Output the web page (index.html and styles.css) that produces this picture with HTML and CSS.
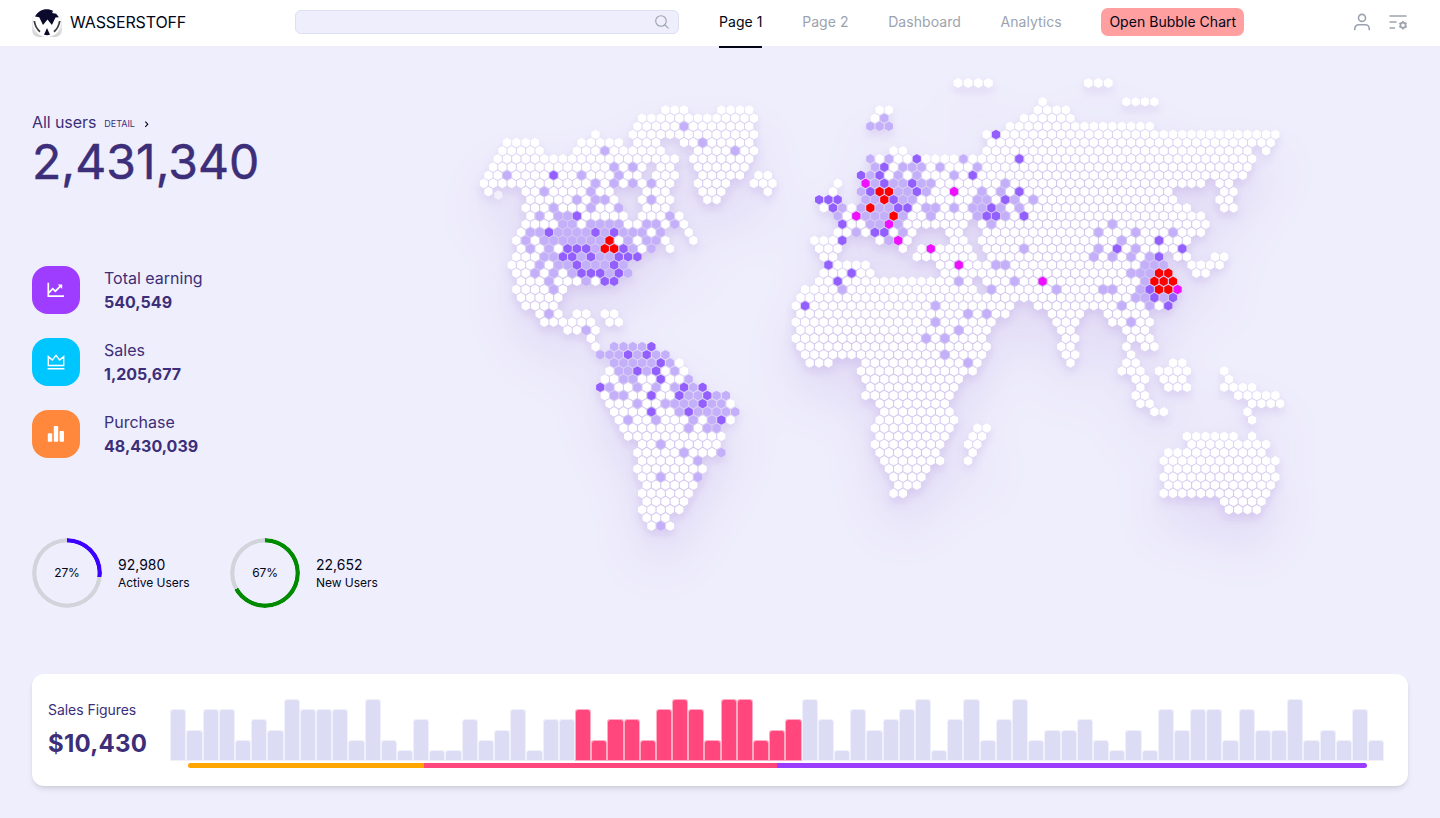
FILE: index.html
```
<!DOCTYPE html>
<html lang="en">
<head>
<meta charset="utf-8">
<title>Wasserstoff</title>
<link rel="stylesheet" href="styles.css">
</head>
<body>
<header class="topbar">
  <a class="brand">
    <svg class="brand-logo" width="30" height="30" viewBox="0 0 30 30">
      <defs><linearGradient id="rim" x1="0" y1="0" x2="0" y2="1"><stop offset="0" stop-color="#fff"/><stop offset="1" stop-color="#d2d2d4"/></linearGradient></defs>
      <rect y="4" width="30" height="25" rx="7" fill="url(#rim)"/>
      <circle cx="15" cy="15" r="14" fill="#fff"/>
      <path d="M3 8.500C6 3.500 10 1.200 14.500 1.200c2.800 0 4.800.5 6.500 1.600l-.8 2.200 4 .8 2.700 3.400-3.400.4-3.600 7.400-4.400-5.500-4.500 5.500L7.200 9.200z" fill="#0b0a2c"/>
      <path d="M2.300 13c.6 4.300 2.500 8 5.700 10.800M27.700 13c-.6 4.300-2.500 8-5.700 10.800" stroke="#3a3a40" stroke-width="1.800" fill="none"/>
      <path d="M15 20l3 6.700c-2 .6-4 .6-6 0z" fill="#0b0a2c"/>
    </svg>
    <span>WASSERSTOFF</span>
  </a>
  <div class="search">
    <svg width="16" height="16" viewBox="0 0 16 16" fill="none" stroke="#9ca3af" stroke-width="1.100" stroke-linecap="round"><circle cx="7" cy="7" r="5.300"/><path d="M11 11L14.200 14.200"/></svg>
  </div>
  <nav class="nav">
    <a class="nav-link nav-link-active">Page 1</a>
    <a class="nav-link">Page 2</a>
    <a class="nav-link">Dashboard</a>
    <a class="nav-link">Analytics</a>
    <button class="nav-button">Open Bubble Chart</button>
  </nav>
  <div class="tools">
    <svg width="20" height="20" viewBox="0 0 20 20" fill="none" stroke="#9ca3af" stroke-width="1.600" stroke-linecap="round"><circle cx="10" cy="5.900" r="3.500"/><path d="M2.800 17.600v-1a3.800 3.800 0 0 1 3.800-3.800h6.800a3.800 3.800 0 0 1 3.800 3.800v1"/></svg>
    <svg width="20" height="20" viewBox="0 0 20 20" fill="none" stroke="#9ca3af" stroke-width="1.700"><path d="M1.500 4h17M1.500 10h7M1.500 16h5.500"/><circle cx="15" cy="13.200" r="2.600"/><path d="M15 9v1.600M15 15.800v1.600M11.400 11.100l1.400.8M17.200 14.500l1.400.8M11.400 15.300l1.400-.8M17.200 11.900l1.400-.8"/></svg>
  </div>
</header>

<main class="main">
  <div class="overview">
    <section class="side">
      <div class="all-users">
        <div class="all-users-head"><span>All users</span><span class="detail">DETAIL</span>
          <svg width="10" height="10" viewBox="0 0 10 10" fill="none" stroke="#020617" stroke-width="1.100"><path d="M3.300 2.600L5.800 5.200 3.300 7.800"/></svg>
        </div>
        <div class="all-users-value">2,431,340</div>
      </div>
      <div class="stats">
        <div class="stat">
          <span class="stat-icon stat-earning"><svg width="20" height="20" viewBox="0 0 20 20" fill="none" stroke="#fff" stroke-width="1.700"><path d="M2.300 2.800v13.300H18M2.800 12.800L6.700 8.700 9.300 11.200 15 5.600"/><path d="M11.700 4.600H16.200V9.100z" fill="#fff" stroke="none"/></svg></span>
          <div><div>Total earning</div><div class="stat-value">540,549</div></div>
        </div>
        <div class="stat">
          <span class="stat-icon stat-sales"><svg width="20" height="20" viewBox="0 0 20 20" fill="none" stroke="#fff" stroke-width="1.400"><path d="M2.300 4.600v8.900h15.400V4.600l-4 3.500L10 3.300 6.300 8.100zM1.600 16.700h16.800"/></svg></span>
          <div><div>Sales</div><div class="stat-value">1,205,677</div></div>
        </div>
        <div class="stat">
          <span class="stat-icon stat-purchase"><svg width="20" height="20" viewBox="0 0 20 20" fill="#fff"><rect x="1.800" y="9.300" width="4.400" height="8.500" rx=".8"/><rect x="7.800" y="2" width="4.400" height="15.800" rx=".8"/><rect x="13.600" y="7" width="4.400" height="10.800" rx=".8"/></svg></span>
          <div><div>Purchase</div><div class="stat-value">48,430,039</div></div>
        </div>
      </div>
      <div class="rings">
        <div class="ring-item">
          <div class="ring ring-active"><span>27%</span></div>
          <div><div class="ring-value">92,980</div><div class="ring-label">Active Users</div></div>
        </div>
        <div class="ring-item">
          <div class="ring ring-new"><span>67%</span></div>
          <div><div class="ring-value">22,652</div><div class="ring-label">New Users</div></div>
        </div>
      </div>
    </section>
    <svg class="map" id="map" width="968" height="580" viewBox="440 46 968 580"></svg>
  </div>

  <section class="sales">
    <div class="sales-head"><div class="sales-title">Sales Figures</div><div class="sales-value">$10,430</div></div>
    <div class="chart">
      <div class="bars" id="bars"></div>
      <div class="range"><i class="range-a"></i><i class="range-b"></i><i class="range-c"></i></div>
    </div>
  </section>
</main>
<script src="app.js"></script>
</body>
</html>
```
FILE: styles.css
```
* { box-sizing: border-box; }
body {
  margin: 0;
  height: 818px;
  overflow: hidden;
  background: #efeefc;
  color: #020617;
  font: 16px/24px Inter, "Liberation Sans", sans-serif;
}
.topbar { display: flex; height: 46px; padding: 0 32px; background: #fff; align-items: center; }
.brand { display: flex; align-items: center; gap: 8px; width: 263px; height: 44px; letter-spacing: -.13px; }
.brand span { margin-bottom: 2px; }
.brand-logo { display: block; }
.search {
  display: flex; align-items: center; justify-content: flex-end;
  width: 384px; height: 24px; padding-right: 8px; margin: 0 40px 2px 0;
  background: #efeefc; border: 1px solid #dddff3; border-radius: 6px;
}
.nav { display: flex; align-items: flex-start; gap: 39.7px; font-size: 14px; line-height: 20px; letter-spacing: .05px; height: 46px; }
.nav-link { height: 48px; padding-top: 12px; color: #9ca3af; white-space: nowrap; }
.nav-link-active { color: #020617; border-bottom: 2px solid #020617; }
.nav-button {
  margin-top: 8px; height: 28px; padding: 0 8px; border: 0; border-radius: 7px;
  background: #ff9f9f; color: #020617; font: inherit; letter-spacing: .04px; white-space: nowrap;
}
.tools { display: flex; gap: 16px; margin: 0 0 2px auto; }
.tools svg { display: block; }

.main { padding: 0 32px; }
.overview { display: flex; height: 628px; }
.side { width: 408px; padding-top: 64px; color: #3c2e78; flex: none; }
.all-users-head { display: flex; align-items: center; height: 24px; letter-spacing: -.08px; }
.all-users-head svg { margin: 4px 0 0 7px; }
.detail { margin: 4px 0 0 8px; font-size: 9px; line-height: 12px; letter-spacing: 0; }
.all-users-value { font-size: 48px; line-height: 56px; letter-spacing: .08px; -webkit-text-stroke: .5px #3c2e78; }
.stats { display: flex; flex-direction: column; gap: 24px; margin-top: 76px; }
.stat { display: flex; gap: 24px; height: 48px; }
.stat-icon { display: grid; place-items: center; width: 48px; height: 48px; border-radius: 16px; }
.stat-earning { background: #9e3dff; }
.stat-sales { background: #00c6ff; }
.stat-purchase { background: #ff883c; }
.stat-value { font-weight: 700; }
.rings { display: flex; gap: 40px; margin-top: 80px; color: #020617; }
.ring-item { display: flex; align-items: center; gap: 16px; white-space: nowrap; width: 158px; }
.ring { position: relative; display: grid; place-items: center; flex: none; width: 70px; height: 70px; font-size: 12px; letter-spacing: -.15px; }
.ring::before {
  content: ""; position: absolute; inset: 0; border-radius: 50%;
  -webkit-mask: radial-gradient(closest-side, transparent 30.2px, #000 30.9px);
  mask: radial-gradient(closest-side, transparent 30.2px, #000 30.9px);
}
.ring-active::before { background: conic-gradient(#3b00ff 27%, #d1d5db 0); }
.ring-new::before { background: conic-gradient(#008a00 67%, #d1d5db 0); }
.ring-value { font-size: 14px; line-height: 20px; }
.ring-label { font-size: 12px; line-height: 16px; letter-spacing: -.04px; }

.map { display: block; flex: none; }
.cells { filter: drop-shadow(0 5px 5px rgba(110, 50, 190, .15)) drop-shadow(0 32px 24px rgba(110, 50, 190, .12)); }
.cell { fill: #fff; stroke: #fff; stroke-width: 1.7; stroke-linejoin: round; }
.cell-l { fill: #c4affa; stroke: #c4affa; }
.cell-d { fill: #935fff; stroke: #935fff; }
.cell-m { fill: #ee10ff; stroke: #ee10ff; }
.cell-r { fill: #f00; stroke: #f00; }
.cell-faint { opacity: .6; }

.sales {
  display: flex; height: 112px; padding: 24px 23.5px 0 16px; background: #fff; border-radius: 12px;
  box-shadow: 0 4px 6px -1px rgba(0, 0, 0, .1), 0 2px 4px -2px rgba(0, 0, 0, .1);
}
.sales-head { width: 122.3px; color: #3c2e78; }
.sales-title { font-size: 14px; line-height: 24px; letter-spacing: -.05px; }
.sales-value { font-size: 24px; line-height: 32px; margin-top: 6px; font-weight: 700; letter-spacing: .25px; }
.chart { flex: 1; }
.bars { display: flex; align-items: flex-end; height: 63px; }
.bar { flex: 1; background: #dcddf4; background-clip: padding-box; border: 1px solid rgba(220, 221, 244, .45); border-width: 1px .5px; border-radius: 3px 3px 0 0; }
.bar-on { background-color: #ff477e; border-color: rgba(255, 71, 126, .45); }
.range { display: flex; height: 5px; margin: 2px 17.5px 0 17.7px; border-radius: 3px; overflow: hidden; }
.range-a { flex: 2; background: #ffa500; }
.range-b { flex: 3; background: #ff477e; }
.range-c { flex: 5; background: #9b3dff; }
```
FILE: app.js
```
// Each row lists land spans by x position; l/d/m/r prefixes mark density levels.
const rows = [
  "1043 1126-1154",
  "665-684 721-749 879-889 1038-1066",
  "642-754 875-884 1024-1071 l884",
  "638-749 870-889 1010-1150 l684 l870-889",
  "595 633-754 986-1276 d996",
  "507-535 582-619 638-656 684-749 991-1270 l703",
  "503-540 577-661 698-754 893-903 986-1247 1266 l605 l735",
  "498-675 693-749 870-1252 l870 l889 l963 d917 d1019",
  "493-642 661-670 698-745 875-1247 l614 l633 l875 l903-921 l940 l977 d884",
  "489-637 656-675 703-740 758-768 861-1243 l507 d554 l582 l619 l870 l898 l917 l954 d861 d879 d972",
  "484-670 698-730 754-773 837 865-1201 1220-1229 l596 l614 l633 l651 m865 l875 l893-903 l921-931 l1005 d884 d912",
  "489 526-610 647-665 703-721 768 833 861-1168 1224-1234 l544 l591 l861 l898-907 l926 l982 l1000 r879-889 d870 d917 d1019 m954",
  "531-614 642-670 707-717 819-838 865-1173 1220-1229 l577 l596-605 l651 d819-838 r884 d893 d1005 l865-875 l903-912 l977-986 l1014 l1033",
  "526-619 647-665 823-1187 1224-1234 l554 l591 l619 d833 l842 l861 r870 l879-889 d898-907 l926-935 l954 l973-982 d991 l1000 l1019",
  "531-624 642-679 837-1201 l540 l559-568 d577 l670 l837 m856 l865-884 r893 l903 l931 l977 d986-996 l1005 d1024",
  "526-684 842-963 982-1206 l563-573 l591-619 l647-656 l675 d842 l870-879 m889 l898 l991 l1112",
  "521-661 689 837-912 949-958 986-1201 l531-540 d549 l559-587 d596 l605 d614 l624-642 l661 l856 d875-884 l903 l1098 l1136 l1173",
  "516-665 693 814-842 879-907 954-963 982-1187 l526 l545-600 r610 l628 l647-656 d842 l889 m898 l1122 d1159",
  "521-652 670 820-838 903 921-968 987-1182 l531 l549 d568-587 l596 r605-614 d624 l633 l652 m931 l1024 l1098 d1117 l1136 d1182",
  "517-638 824-833 917-973 991-1159 1178-1187 1215-1224 l545-554 d563-573 l582 d591 l600-610 d619-638 l1094 l1113 l1131 l1150 d1159",
  "512-624 828-866 940-977 987-1164 1192-1220 l540 l559-568 d577 l587-605 d614 l624 d828 m959 l996-1005 l1145-1164",
  "517-628 824-870 945-1168 1196-1206 l535 l554 l573 d582-600 l610 d619 l628 d852 l1131-1150 r1159-1168",
  "521-614 819-968 987-1173 l549 l587 d605-614 d838 l959 l1015 m1043 l1145 r1154-1173",
  "517-563 805-973 991-1178 l554 l842 l991 l1057 l1103-1113 l1141 d1150 r1159-1168 m1178",
  "521-559 800-1173 l1136-1145 d1154 l1164 d1173",
  "526-554 796-1010 1038-1168 d805 l935 l1122 l1150 d1168",
  "540-559 577-587 605-614 800-1005 1052-1080 1108-1145 l549 l968 l987",
  "545-591 610-619 796-991 1057-1075 1113-1150 l935 l1131",
  "568-596 800-987 1061-1071 1126-1145 l587 l959",
  "591 796-982 1066-1075 1131-1150 l926 l945",
  "596 614-652 800-987 1061-1071 1126 1145-1154 l614-642 d652",
  "600-665 805-982 1066-1075 1131 l600-665 d628 d647 l945",
  "614-680 810-828 866-977 1071 1126-1136 1173-1182 l614-652 d661 l670 l968",
  "610-684 861-973 1122-1141 1159-1187 1224 l619-628 d638 l647 d656 l675",
  "605-689 866-959 1136-1145 1164-1182 1229 l624-633 d661 l689",
  "600-703 870-954 1141 1168-1187 1224-1252 d600 l610 l638 l656 l675 d684 l693 d703",
  "605-726 866-949 1136-1145 1238-1275 l614-624 d652 d680 l689-698 d707 l717-726",
  "610-731 879-945 1141-1150 1252-1280 l638 l665-693 d703 l712-721",
  "614-735 884-949 1154-1164 1247 d652 l680 d689 l698-735",
  "619-731 879-954 1252 l628 l656 l693 l712 d721",
  "624-717 875-949 977-987 l689 l707-717",
  "628-721 879-945 973-982 1187-1233 1252",
  "642-717 875-940 968-977 1192-1266 l661",
  "638-721 879-935 973 1168-1261 l684 l721",
  "642-698 884-940 968 1164-1275 l698",
  "638-703 888-926 1168-1271",
  "642-698 893-921 1164-1275 l661 l698",
  "647-693 898-917 1168-1271",
  "642-689 893-903 1164-1266",
  "647-684 1224-1261",
  "642-680 1229-1257",
  "647-665",
  "652-670 l661"
];
const pitch = 9.314, rise = 8.157;
const hex = (x, y, cls = "", s = 1) => {
  const w = 3.25 * s, h = 3.8 * s, q = h / 2;
  return `<path class="cell ${cls}" d="M${x.toFixed(1)} ${(y - h).toFixed(1)}l${w} ${q}v${h}l${-w} ${q}l${-w} ${-q}v${-h}z"/>`;
};
let cells = "";
rows.forEach((row, i) => {
  const k = i - 1;
  const x0 = k % 2 === 0 ? 488.4 : 483.75;
  const found = new Map();
  row.split(" ").forEach(token => {
    const level = /^[a-z]/.test(token) ? token[0] : "";
    const [a, b = a] = token.replace(/^[a-z]/, "").split("-").map(v => Math.round((v - x0) / pitch));
    for (let c = a; c <= b; c++) found.set(c, level);
  });
  found.forEach((level, c) => { cells += hex(x0 + c * pitch, 110 + k * rise, level && "cell-" + level); });
});
// Arctic islands sit off the regular grid.
[958, 968.2, 978.3, 988.4, 1088.3, 1098.3, 1108.3].forEach(x => { cells += hex(x, 83, "", 1.08); });
cells += hex(498.3, 195, "cell-faint");
document.getElementById("map").innerHTML = `<g class="cells">${cells}</g>`;

const series = "5355243655526214114235144" + "52442565266234" + "641534561462462334213153552533623252";
document.getElementById("bars").innerHTML = [...series].map((n, i) =>
  `<div class="bar${i >= 25 && i < 39 ? " bar-on" : ""}" style="height:${(n * 10.3 + 0.5).toFixed(1)}px"></div>`).join("");
```
